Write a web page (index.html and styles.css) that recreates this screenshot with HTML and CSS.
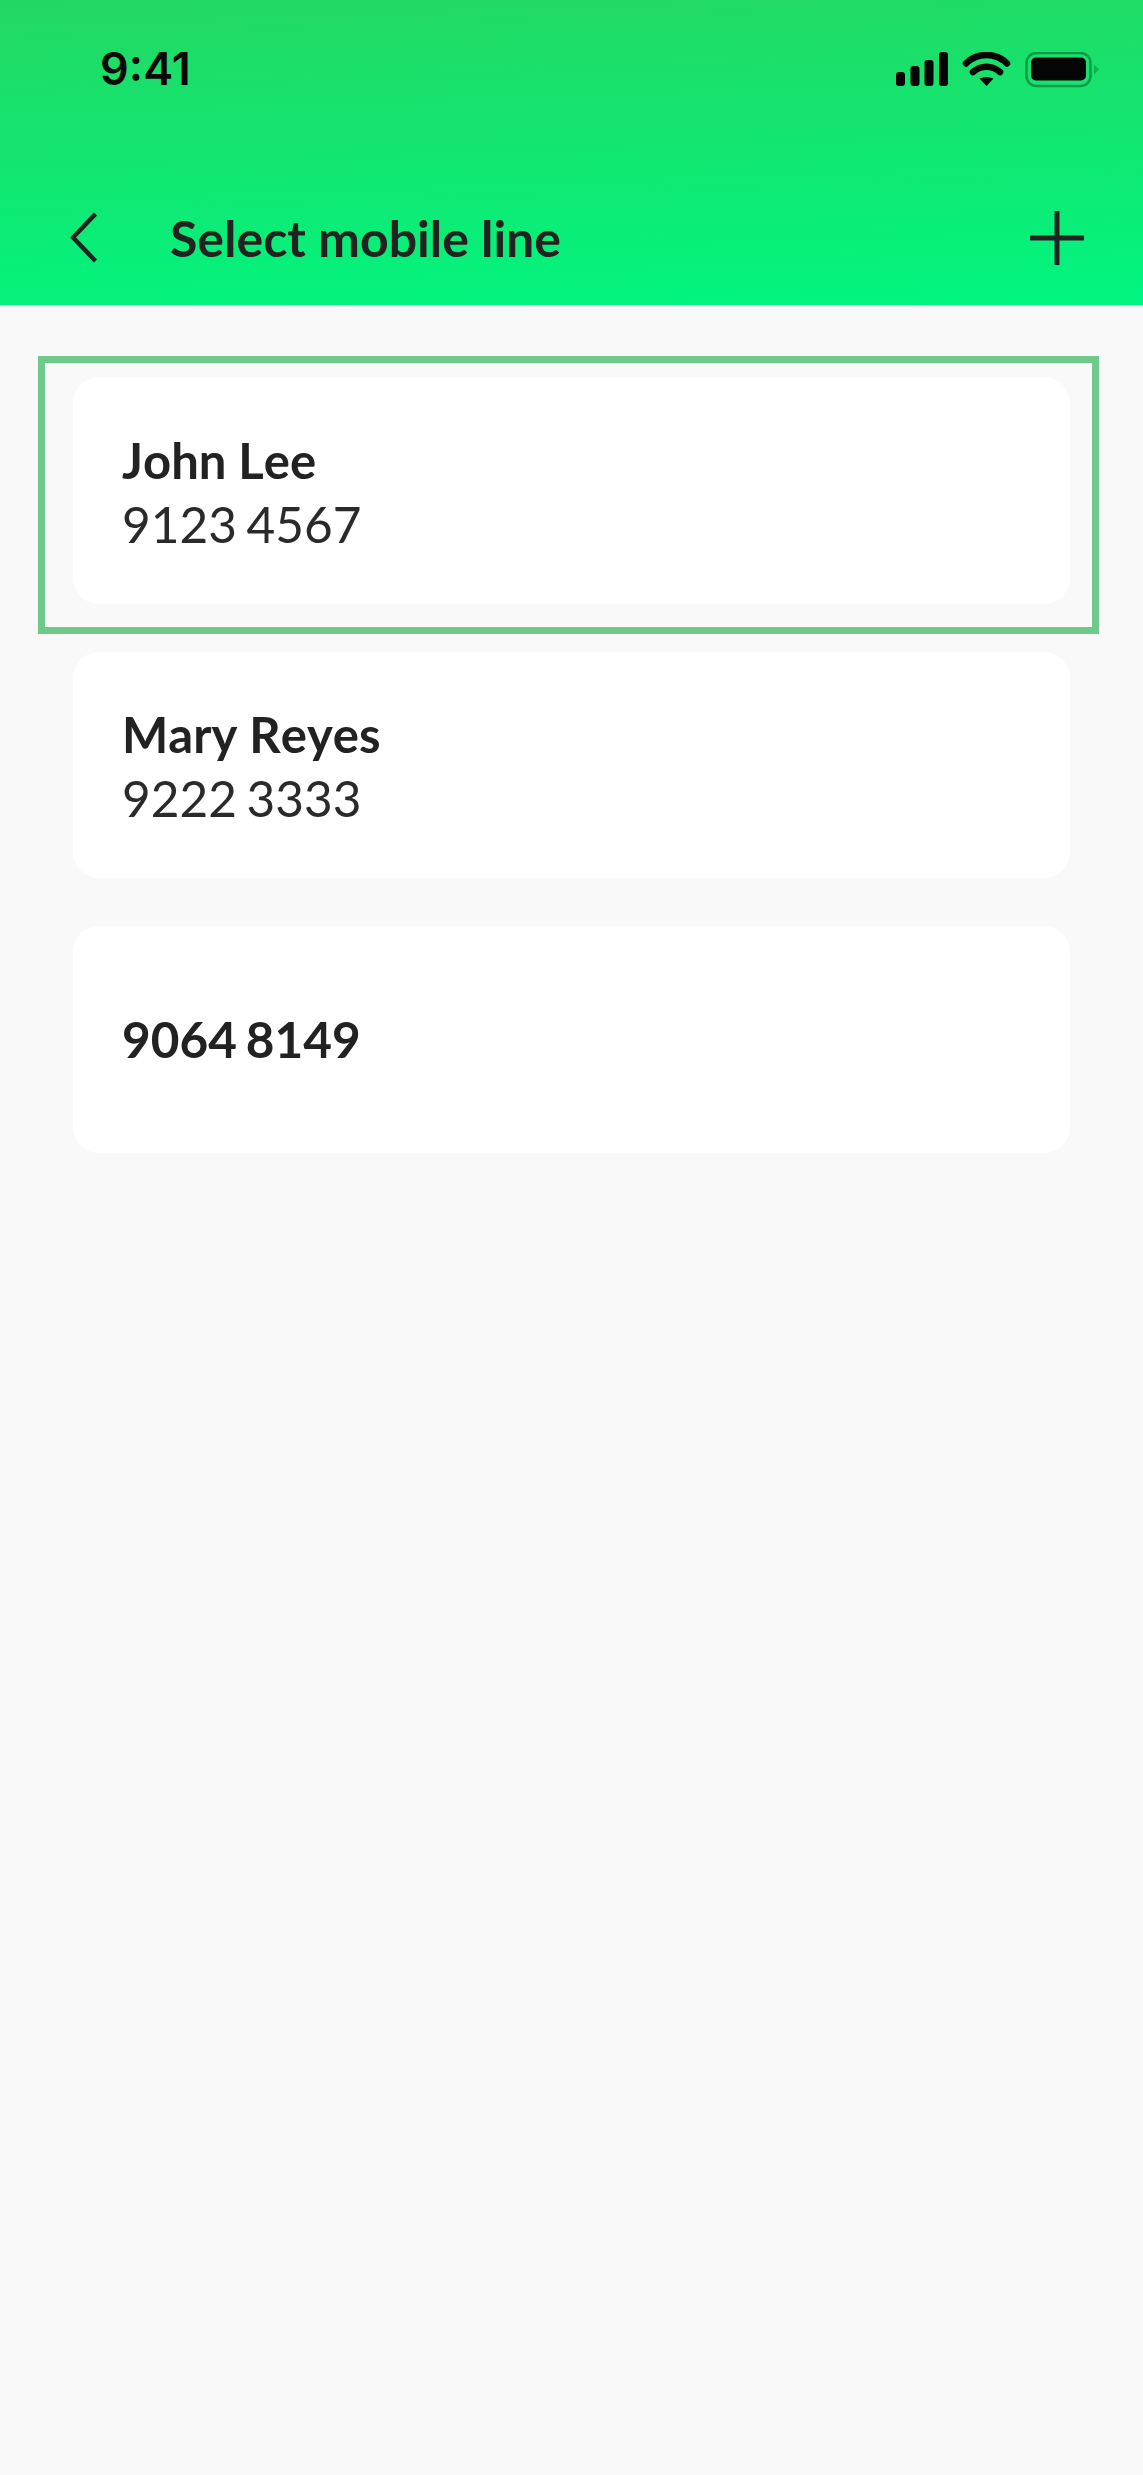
FILE: index.html
```html
<!DOCTYPE html>
<html lang="en">
<head>
<meta charset="utf-8">
<title>Select mobile line</title>
<link rel="stylesheet" href="styles.css">
</head>
<body>
<header class="header">
  <div class="status">
    <span class="time">9:41</span>
    <svg class="status-icons" width="204" height="36" viewBox="0 0 204 36">
      <rect x="0" y="20" width="9" height="14" rx="3"/>
      <rect x="14.500" y="14" width="9" height="20" rx="3"/>
      <rect x="28.500" y="8" width="9" height="26" rx="3"/>
      <rect x="43" y="0" width="9" height="34" rx="3"/>
      <path d="M70 11.500C81 0 100 0 111 11.500" class="wifi"/>
      <path d="M77 20C85 13 96 13 104 20" class="wifi"/>
      <path d="M90.500 34 L97.500 26.500 Q90.500 23.500 83.500 26.500 Z"/>
      <rect x="130.500" y="1" width="64" height="33" rx="10" class="batt-line"/>
      <rect x="135" y="5.500" width="55" height="23" rx="5"/>
      <path d="M198 12.500 L203 17.500 L198 22.500 Z" class="batt-nub"/>
    </svg>
  </div>
  <nav class="nav">
    <svg class="back" width="28" height="52" viewBox="0 0 28 52"><path d="M25.500 2 L3 25.500 L25.500 49"/></svg>
    <h1 class="title">Select mobile line</h1>
    <svg class="plus" width="54" height="54" viewBox="0 0 54 54"><path d="M27 1V53M1 27H53"/></svg>
  </nav>
</header>
<main class="list">
  <article class="card card-selected">
    <div class="name">John Lee</div>
    <div class="number">9123 4567</div>
    <span class="highlight"></span>
  </article>
  <article class="card">
    <div class="name">Mary Reyes</div>
    <div class="number">9222 3333</div>
  </article>
  <article class="card">
    <div class="name tight">9064 8149</div>
  </article>
</main>
</body>
</html>
```
FILE: styles.css
```css
* { box-sizing: border-box; }
html, body { margin: 0; padding: 0; }
body {
  width: 1143px;
  min-height: 2475px;
  background: #f9f9f9;
  font-family: "Lato", "Liberation Sans", sans-serif;
  color: #222;
  overflow: hidden;
}
.header {
  height: 305px;
  background: linear-gradient(178deg, #23d862 0%, #00f680 100%);
  display: flex;
  flex-direction: column;
}
.status {
  height: 132px;
  padding: 44px 43px 0 100px;
  display: flex;
  justify-content: space-between;
  align-items: flex-start;
}
.time {
  font-family: "Inter", "Roboto", sans-serif;
  font-weight: 600;
  font-size: 45px;
  line-height: 50px;
  color: #0a0a0a;
}
.status-icons { margin-top: 8px; fill: #050505; }
.wifi { fill: none; stroke: #050505; stroke-width: 6.500; stroke-linecap: round; }
.batt-line { fill: none; stroke: #0f9a4a; stroke-width: 2.500; }
.batt-nub { fill: #0fb052; }
.nav {
  height: 173px;
  padding: 38px 59px 0 70px;
  display: flex;
  align-items: center;
}
.back { fill: none; stroke: #222; stroke-width: 4.500; flex: none; }
.plus { fill: none; stroke: #222; stroke-width: 5; stroke-linecap: round; flex: none; margin-left: auto; }
.title {
  margin: 0 0 0 72px;
  font-size: 50px;
  line-height: 54px;
  font-weight: 700;
  color: #222;
}
.list {
  padding: 72px 73px 0 73px;
  display: flex;
  flex-direction: column;
  gap: 48px;
}
.card {
  position: relative;
  height: 226.500px;
  background: #fff;
  border-radius: 26px;
  padding: 0 49px;
  display: flex;
  flex-direction: column;
  justify-content: center;
}
.name { font-size: 49px; line-height: 64px; font-weight: 700; color: #222; font-kerning: none; }
.tight { word-spacing: -3px; font-size: 49.500px; }
.number { font-size: 49.500px; line-height: 64px; font-weight: 400; color: #2a2a2a; word-spacing: -3px; margin-bottom: -3px; }
.highlight {
  position: absolute;
  inset: -21px -29px -30px -35px;
  border: 7px solid #6fc98a;
  pointer-events: none;
}
```
